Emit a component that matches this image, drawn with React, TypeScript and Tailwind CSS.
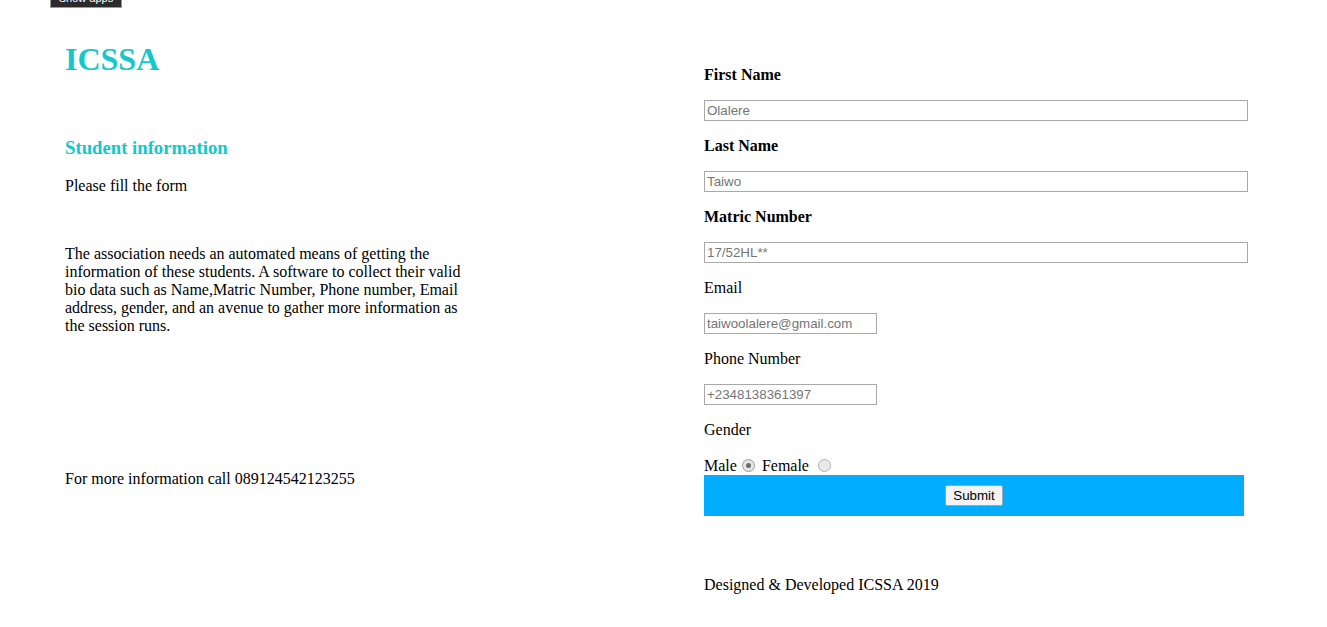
import React from "react";

function Radio({ checked }: { checked?: boolean }) {
  return (
    <span
      className={
        "relative inline-block w-[13px] h-[13px] rounded-full border ml-[5px] mr-[3px] align-[-1px] " +
        (checked
          ? "border-[#9a9a9a] bg-[#e6e6e6]"
          : "border-[#b4b4b4] bg-[#e9e9e9]")
      }
    >
      {checked && <span className="absolute left-[3px] top-[3px] w-[5px] h-[5px] rounded-full bg-[#6b6b6b]" />}
    </span>
  );
}

function Field({
  label,
  bold,
  value,
  wide,
}: {
  label: string;
  bold?: boolean;
  value: string;
  wide?: boolean;
}) {
  return (
    <div className="flex flex-col">
      <div className={"h-[18px] leading-[18px] text-[16px] " + (bold ? "font-bold" : "")}>{label}</div>
      <input
        readOnly
        placeholder={value}
        className={
          "mt-[16px] mb-[16px] h-[21px] border border-[#a9a9a9] bg-white px-[2px] py-[1px] text-[13.33px] leading-[15px] placeholder:text-[#757575] outline-none " +
          (wide ? "w-[544px]" : "w-[173px]")
        }
        style={{ fontFamily: '"Liberation Sans", Arial, sans-serif' }}
      />
    </div>
  );
}

export default function App() {
  return (
    <div
      className="relative w-[1327px] h-[627px] bg-white text-black overflow-hidden"
      style={{ fontFamily: '"Liberation Serif", "Times New Roman", serif' }}
    >
      <div
        className="absolute left-[50px] top-[-14px] w-[72px] h-[22px] bg-[#2b2b2e] border border-[#9a9a9a] text-white text-[11px] leading-[22px] text-center"
        style={{ fontFamily: '"Liberation Sans", Arial, sans-serif' }}
      >
        Show apps
      </div>
      <div className="flex">
        <div className="w-[704px] shrink-0 pl-[65px] pt-[41px] flex flex-col">
          <h1 className="text-[32px] leading-[36px] font-bold text-[#12c8cc]">ICSSA</h1>
          <h3 className="mt-[60px] text-[18.72px] leading-[21px] font-bold text-[#12c8cc]">Student information</h3>
          <p className="mt-[19px] text-[16px] leading-[18px]">Please fill the form</p>
          <p className="mt-[50px] w-[405px] text-[16px] leading-[18px]">
            The association needs an automated means of getting the information of these students. A software to collect their valid bio data such as Name,Matric Number, Phone number, Email address, gender, and an avenue to gather more information as the session runs.
          </p>
          <p className="mt-[135px] text-[16px] leading-[18px]">For more information call 089124542123255</p>
        </div>
        <div className="pt-[66px] flex flex-col">
          <Field label="First Name" bold value="Olalere" wide />
          <Field label="Last Name" bold value="Taiwo" wide />
          <Field label="Matric Number" bold value="17/52HL**" wide />
          <Field label="Email" value="taiwoolalere@gmail.com" />
          <Field label="Phone Number" value="+2348138361397" />
          <div className="h-[18px] leading-[18px] text-[16px]">Gender</div>
          <div className="mt-[18px] h-[18px] leading-[18px] text-[16px] whitespace-nowrap">
            Male<Radio checked /> Female <Radio />
          </div>
          <div className="w-[540px] h-[41px] bg-[#00adff] flex justify-center pt-[10px]">
            <button
              className="w-[58px] h-[21px] bg-[#f3f3f3] border border-[#a3a3a3] rounded-[2px] text-[13.33px] leading-[15px] text-black"
              style={{ fontFamily: '"Liberation Sans", Arial, sans-serif' }}
            >
              Submit
            </button>
          </div>
          <p className="mt-[60px] text-[16px] leading-[18px]">Designed &amp; Developed ICSSA 2019</p>
        </div>
      </div>
    </div>
  );
}
